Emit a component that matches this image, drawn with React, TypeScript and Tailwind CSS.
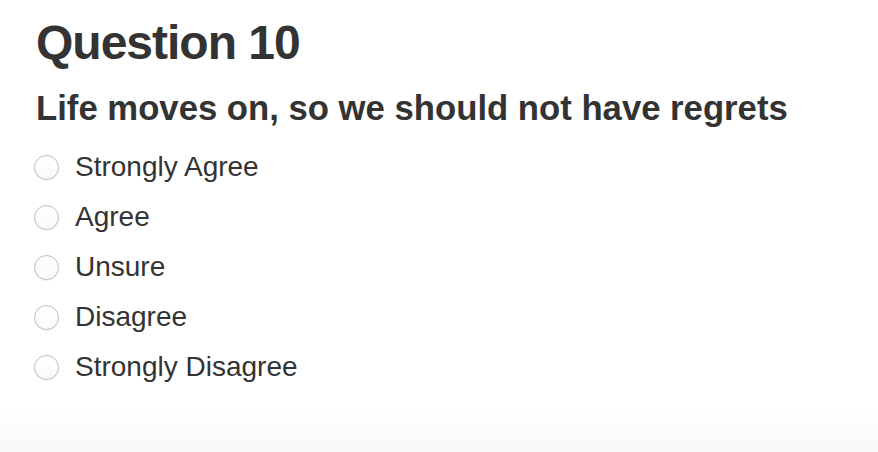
const options = ['Strongly Agree', 'Agree', 'Unsure', 'Disagree', 'Strongly Disagree'];

export default function App() {
  return (
    <div className="min-h-[452px] flex flex-col bg-white text-[#333333] font-['Liberation_Sans',Arial,sans-serif]">
      <div className="flex-1 pl-[36px] pt-[19px]">
        <h1 className="text-[48px] leading-[48px] font-bold tracking-[-1px]">Question 10</h1>
        <h3 className="mt-[24px] text-[34.7px] leading-[35px] font-bold">
          Life moves on, so we should not have regrets
        </h3>
        <div className="mt-[16px] flex flex-col">
          {options.map((opt) => (
            <label key={opt} className="flex items-center h-[50px] cursor-pointer">
              <span className="ml-[-2px] w-[25px] h-[25px] rounded-full border border-[#bdbdbd] bg-gradient-to-b from-white to-[#fafafa] shadow-[0_1px_1px_rgba(0,0,0,0.06)]" />
              <span className="ml-[16px] text-[28px] leading-[50px]">{opt}</span>
            </label>
          ))}
        </div>
      </div>
      <div className="h-[45px] bg-gradient-to-b from-white to-[#f8f8f8]" />
    </div>
  );
}
